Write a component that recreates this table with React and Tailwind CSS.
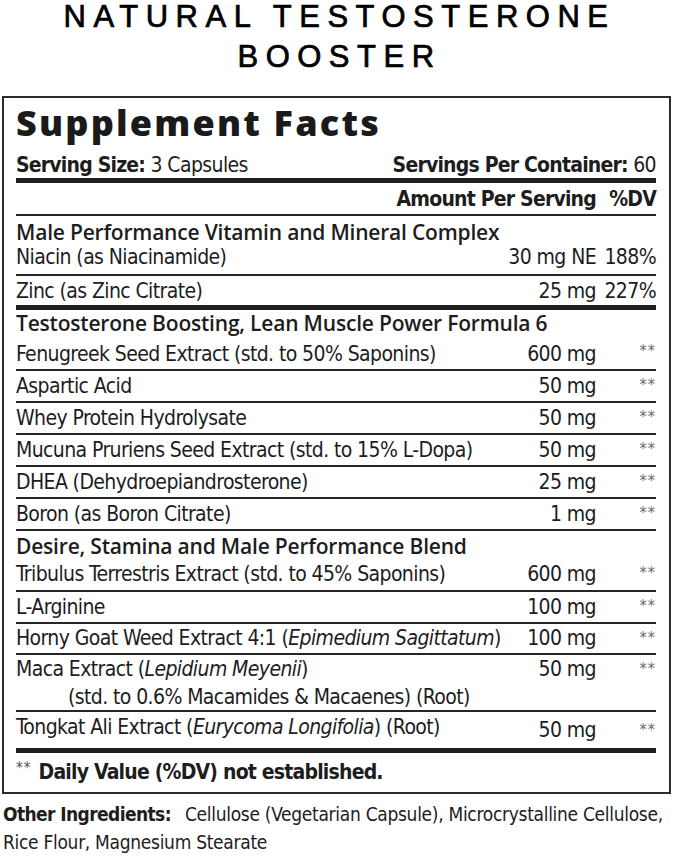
import React from 'react';

const narrow = "font-['DejaVu_Sans_Condensed','Liberation_Sans_Narrow',sans-serif]";
const head = "font-['Open_Sans','Lato',sans-serif]";

function Stars() {
    return (
        <span className="w-[60px] self-start pt-[6px] text-right text-[16px] leading-none tracking-[1px] text-[#6b6b6b]">**</span>
    );
}

function Item({ name, amt, h = 'h-[32px]', pb = 'pb-[4px]', line = 'border-b-2' }) {
    return (
        <div className={`flex items-end ${line} border-[#262626] ${h} ${pb} text-[21px] leading-none tracking-[-0.6px]`}>
            <span className="flex-1">{name}</span>
            <span>{amt}</span>
            <Stars />
        </div>
    );
}

export default function App() {
    return (
        <div className="w-[679px] min-h-[863px] overflow-hidden bg-white text-[#1d1d1d]">
            {/* Title */}
            <div className="h-[99px]">
                <div className="-mt-[3px] text-center font-['Liberation_Sans',Arial,sans-serif] text-[31px] leading-[40px] tracking-[7.5px] text-black [-webkit-text-stroke:0.7px_black]">
                    NATURAL TESTOSTERONE
                    <br />
                    BOOSTER
                </div>
            </div>

            {/* Facts panel */}
            <div className={`ml-[2px] w-[669px] border-2 border-[#2b2b2b] pl-[12px] pr-[13px] ${narrow}`}>
                <div className={`h-[44px] ${head} text-[36px] font-extrabold leading-[50px] tracking-[2.2px] text-[#1a1a1a]`}>Supplement Facts</div>

                <div className="flex h-[41px] items-end justify-between border-b-[5px] border-[#1f1f1f] pb-[2px] text-[21px] leading-none tracking-[-0.6px]">
                    <span><b className="tracking-[-0.8px]">Serving Size:</b> 3 Capsules</span>
                    <span><b className="tracking-[-0.8px]">Servings Per Container:</b> 60</span>
                </div>

                <div className="flex h-[33px] items-end justify-end border-b-2 border-[#262626] pb-[4px] text-[21px] font-bold leading-none tracking-[-0.8px]">
                    <span>Amount Per Serving</span>
                    <span className="w-[60px] text-right">%DV</span>
                </div>

                {/* Vitamin complex */}
                <div className={`flex h-[28px] items-end pb-[1px] ${head} text-[21px] font-semibold leading-none tracking-[-0.2px]`}>
                    Male Performance Vitamin and Mineral Complex
                </div>
                <div className="flex h-[32px] items-end border-b-2 border-[#262626] pb-[6px] text-[21px] leading-none tracking-[-0.6px]">
                    <span className="flex-1">Niacin (as Niacinamide)</span>
                    <span>30 mg NE</span>
                    <span className="w-[60px] text-right">188%</span>
                </div>
                <div className="flex h-[34px] items-end border-b-[5px] border-[#1f1f1f] pb-[3px] text-[21px] leading-none tracking-[-0.6px]">
                    <span className="flex-1">Zinc (as Zinc Citrate)</span>
                    <span>25 mg</span>
                    <span className="w-[60px] text-right">227%</span>
                </div>

                {/* Formula 6 */}
                <div className={`flex h-[27px] items-end pb-[3px] ${head} text-[21px] font-semibold leading-none tracking-[-0.2px]`}>
                    Testosterone Boosting, Lean Muscle Power Formula 6
                </div>
                <Item name="Fenugreek Seed Extract (std. to 50% Saponins)" amt="600 mg" h="h-[34px]" />
                <Item name="Aspartic Acid" amt="50 mg" />
                <Item name="Whey Protein Hydrolysate" amt="50 mg" />
                <Item name="Mucuna Pruriens Seed Extract (std. to 15% L-Dopa)" amt="50 mg" />
                <Item name="DHEA (Dehydroepiandrosterone)" amt="25 mg" />
                <Item name="Boron (as Boron Citrate)" amt="1 mg" />

                {/* Blend */}
                <div className={`flex h-[28px] items-end pb-[2px] ${head} text-[21px] font-semibold leading-none tracking-[-0.2px]`}>
                    Desire, Stamina and Male Performance Blend
                </div>
                <Item name="Tribulus Terrestris Extract (std. to 45% Saponins)" amt="600 mg" h="h-[33px]" pb="pb-[5px]" />
                <Item name="L-Arginine" amt="100 mg" />
                <Item name={<>Horny Goat Weed Extract 4:1 (<i>Epimedium Sagittatum</i>)</>} amt="100 mg" h="h-[31px]" />

                <div className="flex h-[57px] border-b-2 border-[#262626] text-[21px] leading-[28px] tracking-[-0.6px]">
                    <div className="flex-1">
                        <div>Maca Extract (<i>Lepidium Meyenii</i>)</div>
                        <div className="pl-[52px]">(std. to 0.6% Macamides &amp; Macaenes) (Root)</div>
                    </div>
                    <span>50 mg</span>
                    <Stars />
                </div>

                <div className="flex h-[41px] items-end border-b-[5px] border-[#1f1f1f] pb-[10px] text-[21px] leading-none tracking-[-0.6px]">
                    <span className="flex-1">Tongkat Ali Extract (<i>Eurycoma Longifolia</i>) (Root)</span>
                    <span className="relative top-[3px]">50 mg</span>
                    <span className="w-[60px] self-start pt-[10px] text-right text-[16px] leading-none tracking-[1px] text-[#6b6b6b]">**</span>
                </div>

                <div className="flex h-[39px] items-end pb-[9px] text-[21px] font-bold leading-none tracking-[-0.8px]">
                    <span className="relative -top-[7px] mr-[7px] text-[15px] font-normal tracking-[1px] text-[#555]">**</span>
                    Daily Value (%DV) not established.
                </div>
            </div>

            {/* Other ingredients */}
            <div className={`pl-[3px] pr-[4px] pt-[6px] text-[19px] leading-[28px] tracking-[-0.3px] ${narrow}`}>
                <b className="mr-[14px] tracking-[-0.6px]">Other Ingredients:</b>Cellulose (Vegetarian Capsule), Microcrystalline Cellulose,
                <br />
                Rice Flour, Magnesium Stearate
            </div>
        </div>
    );
}
